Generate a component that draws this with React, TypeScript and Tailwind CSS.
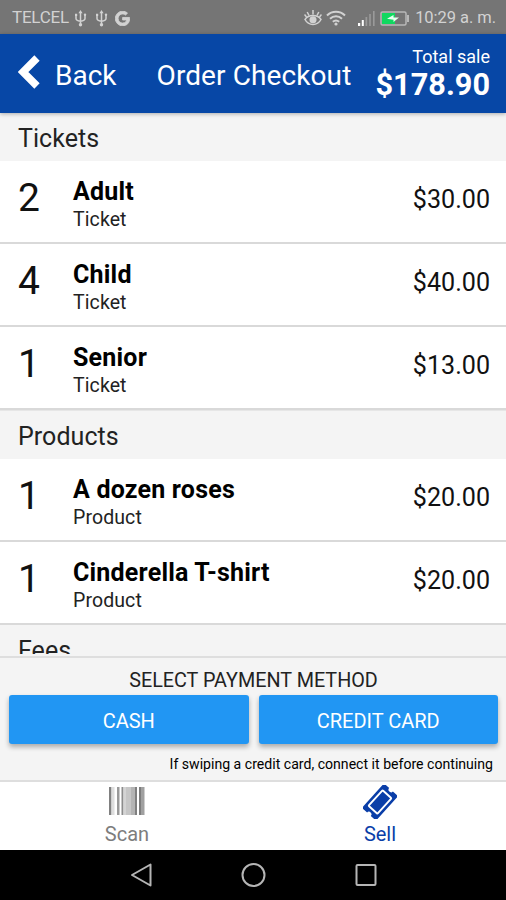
import { FaGoogle } from "react-icons/fa";

type Item = { qty: number; name: string; kind: string; price: string };

const tickets: Item[] = [
  { qty: 2, name: "Adult", kind: "Ticket", price: "$30.00" },
  { qty: 4, name: "Child", kind: "Ticket", price: "$40.00" },
  { qty: 1, name: "Senior", kind: "Ticket", price: "$13.00" },
];

const products: Item[] = [
  { qty: 1, name: "A dozen roses", kind: "Product", price: "$20.00" },
  { qty: 1, name: "Cinderella T-shirt", kind: "Product", price: "$20.00" },
];

// x, width, colour
const bars: [number, number, string][] = [
  [0, 2.5, "#808080"],
  [2.5, 3, "#dedede"],
  [8, 2.5, "#999999"],
  [12.5, 2, "#8c8c8c"],
  [14.5, 2.5, "#d4d4d4"],
  [17, 5, "#c6c6c6"],
  [22, 4, "#b4b4b4"],
  [26, 2, "#808080"],
  [30, 2, "#7c7c7c"],
  [32, 3.5, "#a0a0a0"],
];

function UsbIcon() {
  return (
    <svg width="13" height="17" viewBox="0 0 13 17" fill="none" stroke="currentColor" strokeWidth="1.5">
      <path d="M6.5 2v13M2 5v3.5c0 1.5 1 2.2 4.5 2.8M11 5v3.5c0 1.5-1 2.2-4.5 2.8" />
      <path d="M6.5 0 8.6 3.2H4.4zM1 3.7h2.2v2.2H1z" fill="currentColor" stroke="none" />
      <circle cx="11" cy="4.8" r="1.2" fill="currentColor" stroke="none" />
      <circle cx="6.5" cy="14.8" r="1.7" fill="currentColor" stroke="none" />
    </svg>
  );
}

function TicketIcon() {
  return (
    <svg width="34" height="34" viewBox="-17 -17 34 34">
      <g transform="rotate(-48)">
        <path
          d="M-14-9.5h28a2.5 2.5 0 0 1 2.5 2.5v4.5a2.5 2.5 0 0 0 0 5V7a2.5 2.5 0 0 1-2.5 2.5h-28A2.5 2.5 0 0 1-16.5 7V2.5a2.5 2.5 0 0 0 0-5V-7A2.5 2.5 0 0 1-14-9.5z"
          fill="currentColor"
        />
        <rect x="-10.5" y="-6" width="21" height="12" rx="0.8" fill="none" stroke="#fff" strokeWidth="1.9" />
      </g>
    </svg>
  );
}

function StatusBar() {
  return (
    <div className="flex h-[34px] items-center justify-between bg-[#757575] pl-3 pr-[10px] pt-[2px] text-[#d2d2d2]">
      <div className="flex items-center">
        <span className="w-[62px] text-[17px] tracking-[-0.25px]">TELCEL</span>
        <UsbIcon />
        <span className="w-2" />
        <UsbIcon />
        <FaGoogle className="ml-[7px] size-[15px]" stroke="currentColor" strokeWidth="30" />
      </div>
      <div className="flex items-center">
        <svg width="18" height="16" viewBox="0 0 18 16" fill="none" stroke="currentColor" strokeWidth="1.5">
          <path d="M1 9.5C4.5 4 13.5 4 17 9.5 13.5 16 4.5 16 1 9.5z" />
          <path d="M9 4.5V0M5 5.5 3.2 2M13 5.5 14.8 2M2.5 7 .5 4.5M15.5 7l2-2.5" />
          <circle cx="9" cy="9.8" r="2.8" fill="currentColor" />
        </svg>
        <svg className="ml-[4px]" width="20" height="16" viewBox="0 0 20 16" fill="none" stroke="currentColor" strokeWidth="2">
          <path d="M1 5.5c5-5 13-5 18 0M4 8.8c3.5-3.3 8.5-3.3 12 0M6.8 11.8c2-1.7 4.4-1.7 6.4 0" />
          <circle cx="10" cy="14" r="1.6" fill="currentColor" stroke="none" />
        </svg>
        <svg className="ml-[12px]" width="18" height="16" viewBox="0 0 18 16">
          <path d="M0 13h2.2v3H0zM3.8 10h2v6h-2z" fill="#fff" />
          <path d="M7.5 7h1.7v9H7.5zM11.2 4h1.6v12h-1.6zM15 1h1.6v15H15z" fill="#9a9a9a" />
        </svg>
        <svg className="ml-[4px]" width="30" height="15" viewBox="0 0 30 15">
          <rect x="1" y="1" width="25" height="13" rx="1.5" fill="none" stroke="#b8b8b8" strokeWidth="1.5" />
          <path d="M2 2h13v11H2z" fill="#10d860" />
          <path d="M27 4h2v7h-2z" fill="#b8b8b8" />
          <path d="m7 7.8 6.5-3.8v2.5H19L13.5 11V8.8z" fill="#e8fff0" />
        </svg>
        <span className="ml-[5px] text-[16.5px] tracking-[-0.05px]">10:29 a. m.</span>
      </div>
    </div>
  );
}

function Header() {
  return (
    <header className="relative z-10 flex h-[79px] items-center bg-[#0747a6] pl-[18px] pr-4 text-white shadow-[0_1px_4px_rgba(0,0,0,0.3)]">
      <svg className="-mt-[3px]" width="22" height="34" viewBox="0 0 22 34" fill="none" stroke="currentColor" strokeWidth="7.5">
        <path d="M19 3 5 17 19 31" />
      </svg>
      <span className="ml-[15px] pt-[5px] text-[28px] leading-8">Back</span>
      <h1 className="ml-10 whitespace-nowrap pt-[5px] text-[28px] leading-8 tracking-[0.1px]">Order Checkout</h1>
      <div className="ml-auto pt-[3px] text-right">
        <div className="text-[18px] leading-[19px]">Total sale</div>
        <div className="text-[30.7px] font-bold leading-[37px]">$178.90</div>
      </div>
    </header>
  );
}

function SectionTitle({ children }: { children: string }) {
  return (
    <h2 className="h-12 shrink-0 bg-[#f4f4f4] pl-[18px] text-[25px] leading-[51px] tracking-[0.05px] text-[#222]">
      {children}
    </h2>
  );
}

function ItemRow({ item }: { item: Item }) {
  return (
    <div className="flex h-[83px] shrink-0 border-b-2 border-[#d9d9d9] bg-white pl-[18px] pr-4">
      <div className="w-[55px] pt-4 text-[39px] leading-[42px] tracking-[-1px] text-[#111]">{item.qty}</div>
      <div className="pt-[15px]">
        <div className="text-[25px] font-bold leading-[31px] tracking-[0.2px]">{item.name}</div>
        <div className="text-[19.5px] leading-[26px] tracking-[0.1px] text-[#222]">{item.kind}</div>
      </div>
      <div className="ml-auto pt-[24px] text-[25.1px] leading-[30px] text-[#111]">{item.price}</div>
    </div>
  );
}

export default function App() {
  return (
    <div className="flex h-[900px] w-[506px] flex-col overflow-hidden bg-[#f4f4f4] font-['Roboto',sans-serif] text-black">
      <StatusBar />
      <Header />
      <main className="mb-[2px] flex h-[541px] shrink-0 flex-col overflow-hidden">
        <SectionTitle>Tickets</SectionTitle>
        {tickets.map((item) => (
          <ItemRow key={item.name} item={item} />
        ))}
        <div className="h-px shrink-0 bg-[#e6e6e6]" />
        <SectionTitle>Products</SectionTitle>
        {products.map((item) => (
          <ItemRow key={item.name} item={item} />
        ))}
        <SectionTitle>Fees</SectionTitle>
      </main>
      <section className="h-[126px] shrink-0 border-y-2 border-[#dedede] pl-[9px] pr-2">
        <div className="h-[37px] pt-[9px] text-center text-[19.8px] leading-[28px] text-[#222]">SELECT PAYMENT METHOD</div>
        <div className="flex gap-[10px] text-[20px] text-white">
          <button className="h-[49px] flex-1 rounded-[3px] bg-[#2196f3] pt-[2px] shadow-[0_3px_5px_rgba(0,0,0,0.3)]">CASH</button>
          <button className="h-[49px] flex-1 rounded-[3px] bg-[#2196f3] pt-[2px] shadow-[0_3px_5px_rgba(0,0,0,0.3)]">CREDIT CARD</button>
        </div>
        <p className="pr-[5px] pt-[10px] text-right text-[14.1px] leading-5">If swiping a credit card, connect it before continuing</p>
      </section>
      <nav className="flex h-[68px] shrink-0 bg-white">
        <div className="flex w-[254px] flex-col items-center pt-[5px] text-[#7d7d7d]">
          <svg width="36" height="28" viewBox="0 0 36 28">
            {bars.map(([x, w, color]) => (
              <rect key={x} x={x} width={w} height="28" fill={color} />
            ))}
          </svg>
          <span className="mt-[7px] text-[20px] leading-6">Scan</span>
        </div>
        <div className="flex w-[252px] flex-col items-center pt-[3px] text-[#0a3ea8]">
          <TicketIcon />
          <span className="mt-[3px] text-[20px] leading-6">Sell</span>
        </div>
      </nav>
      <div className="h-[50px] shrink-0 bg-black">
        <svg width="506" height="50" viewBox="0 0 506 50" fill="none" stroke="#b5b5b5" strokeWidth="2">
          <path d="M132 25 150.5 14.5v21z" strokeLinejoin="round" />
          <circle cx="253.5" cy="25" r="11" />
          <rect x="356.5" y="15" width="19" height="20" rx="1" />
        </svg>
      </div>
    </div>
  );
}
